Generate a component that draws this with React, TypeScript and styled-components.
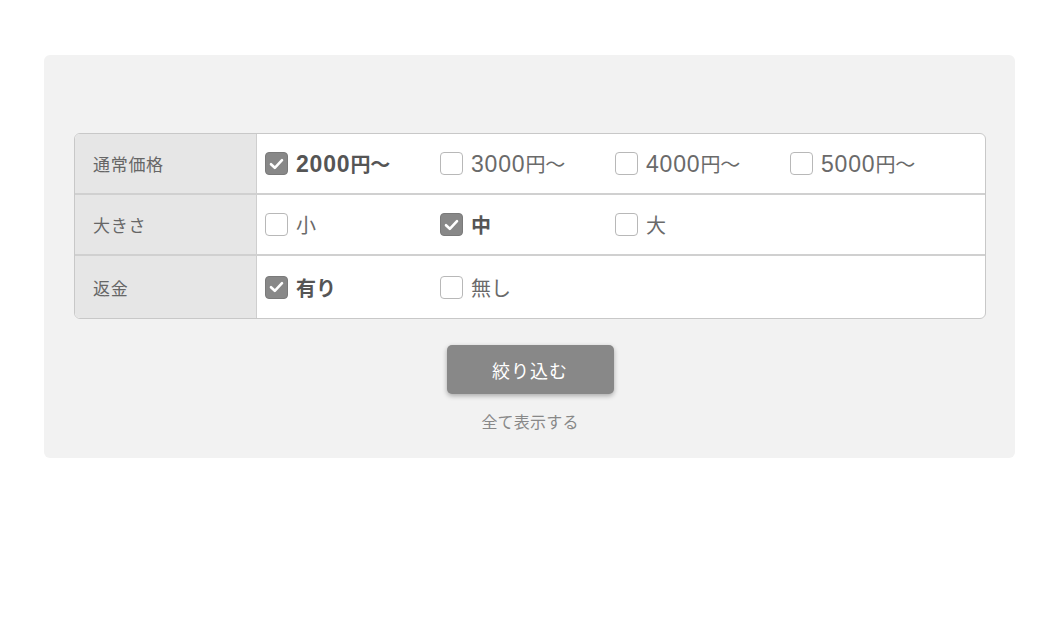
import React, { useState } from 'react'
import styled, { createGlobalStyle } from 'styled-components'

const GlobalStyle = createGlobalStyle`
  body {
    margin: 0;
    background: #ffffff;
    font-family: "Liberation Sans", "Noto Sans CJK JP", sans-serif;
  }
`

const Page = styled('div')`
  padding: 55px 47px 0 44px;
`

const Panel = styled('div')`
  width: 971px;
  box-sizing: border-box;
  background: #f2f2f2;
  border-radius: 6px;
  padding: 78px 29px 25px 30px;
  display: flex;
  flex-direction: column;
  align-items: center;
`

const Table = styled('div')`
  width: 100%;
  box-sizing: border-box;
  border: 1px solid #c8c8c8;
  border-radius: 6px;
  overflow: hidden;
  background: #ffffff;
`

const Row = styled('div')<{ last?: boolean }>`
  display: grid;
  grid-template-columns: 182px 1fr;
  box-sizing: border-box;
  height: ${(p) => (p.last ? 62 : 61)}px;
  border-bottom: ${(p) => (p.last ? 'none' : '2px solid #d0d0d0')};
`

const Head = styled('div')`
  background: #e6e6e6;
  border-right: 1px solid #cfcfcf;
  display: flex;
  align-items: center;
  padding-left: 18px;
  font-size: 17px;
  letter-spacing: 0.7px;
  color: #666;
`

const Options = styled('div')`
  display: flex;
  align-items: center;
  padding-left: 8px;
`

const Option = styled('label')<{ checked: boolean }>`
  width: 175px;
  display: flex;
  align-items: center;
  gap: 8px;
  cursor: pointer;
  font-size: 20px;
  color: ${(p) => (p.checked ? '#555' : '#6a6a6a')};
  font-weight: ${(p) => (p.checked ? 700 : 400)};
`

const Num = styled('span')`
  font-size: 23px;
  letter-spacing: 0.8px;
`

const Box = styled('span')<{ checked: boolean }>`
  width: 23px;
  height: 23px;
  box-sizing: border-box;
  border-radius: 4px;
  border: 1px solid ${(p) => (p.checked ? '#7a7a7a' : '#b8b8b8')};
  background: ${(p) => (p.checked ? '#888888' : '#ffffff')};
  display: flex;
  align-items: center;
  justify-content: center;
  flex-shrink: 0;
`

const Submit = styled('button')`
  margin-top: 26px;
  width: 167px;
  height: 49px;
  border: none;
  border-radius: 5px;
  background: #888888;
  color: #ffffff;
  font-family: inherit;
  font-size: 18px;
  letter-spacing: 1px;
  box-shadow: 0 2px 5px rgba(0, 0, 0, 0.3);
  cursor: pointer;
`

const ShowAll = styled('a')`
  margin-top: 15px;
  font-size: 16px;
  color: #888;
  letter-spacing: 0.2px;
  cursor: pointer;
`

type Item = { num?: string; text: string }
type Group = { title: string; items: Item[] }

const groups: Group[] = [
  {
    title: '通常価格',
    items: [
      { num: '2000', text: '円〜' },
      { num: '3000', text: '円〜' },
      { num: '4000', text: '円〜' },
      { num: '5000', text: '円〜' },
    ],
  },
  { title: '大きさ', items: [{ text: '小' }, { text: '中' }, { text: '大' }] },
  { title: '返金', items: [{ text: '有り' }, { text: '無し' }] },
]

const keyOf = (i: Item) => (i.num || '') + i.text

const Check = () => (
  <svg width="15" height="12" viewBox="0 0 15 12">
    <path d="M2 6.2 L5.8 9.8 L13 2.2" fill="none" stroke="#fff" strokeWidth="2.6" strokeLinecap="round" strokeLinejoin="round" />
  </svg>
)

export default function App() {
  const [selected, setSelected] = useState<Record<string, string[]>>({
    通常価格: ['2000円〜'],
    大きさ: ['中'],
    返金: ['有り'],
  })

  const toggle = (title: string, key: string) => {
    setSelected((s) => {
      const cur = s[title] || []
      return {
        ...s,
        [title]: cur.includes(key) ? cur.filter((i) => i !== key) : [...cur, key],
      }
    })
  }

  return (
    <Page>
      <GlobalStyle />
      <Panel>
        <Table>
          {groups.map((g, gi) => (
            <Row key={g.title} last={gi === groups.length - 1}>
              <Head>{g.title}</Head>
              <Options>
                {g.items.map((item) => {
                  const k = keyOf(item)
                  const on = (selected[g.title] || []).includes(k)
                  return (
                    <Option key={k} checked={on} onClick={() => toggle(g.title, k)}>
                      <Box checked={on}>{on && <Check />}</Box>
                      <span>
                        {item.num && <Num>{item.num}</Num>}
                        {item.text}
                      </span>
                    </Option>
                  )
                })}
              </Options>
            </Row>
          ))}
        </Table>
        <Submit>絞り込む</Submit>
        <ShowAll>全て表示する</ShowAll>
      </Panel>
    </Page>
  )
}
